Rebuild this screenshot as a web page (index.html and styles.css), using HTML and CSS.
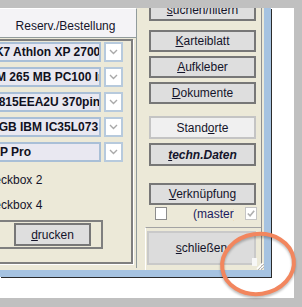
FILE: index.html
```html
<!DOCTYPE html>
<html lang="de">
<head>
  <meta charset="UTF-8">
  <title>Inventar - Gerät</title>
  <link rel="stylesheet" href="styles.css">
</head>
<body>
<div class="screen">
  <div class="window">
    <div class="client">

      <div class="left">
        <div class="tab-strip">
          <div class="tab">Reserv./Bestellung</div>
        </div>
        <div class="page">
          <div class="box">
            <div class="combo"><span class="field">CPU AMD K7 Athlon XP 2700</span><span class="drop"><svg width="9" height="6" viewBox="0 0 9 6"><polyline points="1,1 4.5,4.5 8,1" fill="none" stroke="#a9a9a9" stroke-width="1.4"/></svg></span></div>
            <div class="combo"><span class="field">RAM - DIMM 265 MB PC100 Infineon</span><span class="drop"><svg width="9" height="6" viewBox="0 0 9 6"><polyline points="1,1 4.5,4.5 8,1" fill="none" stroke="#a9a9a9" stroke-width="1.4"/></svg></span></div>
            <div class="combo"><span class="field">MB: Intel D815EEA2U 370pin</span><span class="drop"><svg width="9" height="6" viewBox="0 0 9 6"><polyline points="1,1 4.5,4.5 8,1" fill="none" stroke="#a9a9a9" stroke-width="1.4"/></svg></span></div>
            <div class="combo"><span class="field">HDD1 73,4 GB IBM IC35L073</span><span class="drop"><svg width="9" height="6" viewBox="0 0 9 6"><polyline points="1,1 4.5,4.5 8,1" fill="none" stroke="#a9a9a9" stroke-width="1.4"/></svg></span></div>
            <div class="combo"><span class="field">Windows XP Pro</span><span class="drop"><svg width="9" height="6" viewBox="0 0 9 6"><polyline points="1,1 4.5,4.5 8,1" fill="none" stroke="#a9a9a9" stroke-width="1.4"/></svg></span></div>

            <div class="checks">
              <div class="check">Checkbox 2</div>
              <div class="check">Checkbox 4</div>
            </div>

            <div class="print-group">
              <button class="btn print"><u>d</u>rucken</button>
            </div>
          </div>
        </div>
      </div>

      <div class="right">
        <div class="buttons">
          <button class="btn first"><u>s</u>uchen/filtern</button>
          <button class="btn"><u>K</u>arteiblatt</button>
          <button class="btn"><u>A</u>ufkleber</button>
          <button class="btn"><u>D</u>okumente</button>
          <button class="btn light gap-a">Stand<u>o</u>rte</button>
          <button class="btn italic"><u>t</u>echn.Daten</button>
          <button class="btn gap-b"><u>V</u>erknüpfung</button>
          <div class="check-row">
            <span class="cb"></span>
            <span class="master">(master)</span>
            <span class="cb checked"><svg width="11" height="11" viewBox="0 0 11 11"><polyline points="2,5.5 4.5,8 9,2.5" fill="none" stroke="#b0b0b0" stroke-width="1.8"/></svg></span>
          </div>
        </div>
        <div class="close-area">
          <button class="btn big"><u>s</u>chließen</button>
        </div>
      </div>

      <span class="grip"><svg width="12" height="12" viewBox="0 0 12 12"><rect x="0" y="0" width="5" height="8" fill="#f7f7f7"/><path d="M11 5 L5 11 M11 8 L8 11" stroke="#fff" stroke-width="1.5"/><path d="M12 6 L6 12 M12 9 L9 12" stroke="#b4b4b4" stroke-width="1"/></svg></span>
    </div>
  </div>
</div>

<svg class="mark" width="90" height="76" viewBox="0 0 90 76">
  <ellipse cx="42" cy="36" rx="36" ry="30" transform="rotate(-8 42 36)" fill="none" stroke="#f2865e" stroke-width="4"/>
</svg>
</body>
</html>
```

FILE: styles.css
```css
body {
  margin: 0;
  width: 302px;
  height: 307px;
  overflow: hidden;
  position: relative;
  background: #c0c0c0;
  font: 12px "Liberation Sans", Arial, sans-serif;
  color: #14142a;
}

.screen {
  margin-top: 8px;
  width: 294px;
  height: 290px;
  background: #fff;
}

.window {
  width: 264px;
  height: 262px;
  border-right: 7px solid #a6c3e1;
  border-bottom: 7px solid #a6c3e1;
  box-shadow: 1px 1px 0 #2b2b2b;
}

.client {
  display: flex;
  height: 100%;
  position: relative;
  background: #ece9d8;
  overflow: hidden;
}

/* left tab page */
.left {
  flex: none;
  width: 207px;
  margin-left: -70px;
  display: flex;
  flex-direction: column;
}

.tab-strip {
  flex: none;
  height: 29px;
  display: flex;
  justify-content: flex-end;
}

.tab {
  width: 142px;
  padding-top: 10px;
  line-height: 14px;
  text-align: center;
  background: #f4f3f6;
  border-top: 1px solid #fff;
  border-right: 1px solid #919b9c;
  box-sizing: border-box;
}

.page {
  flex: 1;
  margin-bottom: 2px;
  border-top: 1px solid #919b9c;
  border-right: 1px solid #919b9c;
  padding: 1px 3px 0 0;
}

.box {
  height: 225px;
  box-sizing: border-box;
  border: 2px solid #7f7f7f;
  box-shadow: 1px 1px 0 #fff;
  padding: 1px 0 0 2px;
}

.combo {
  display: flex;
  gap: 3px;
  height: 20px;
  margin-bottom: 5px;
}

.field {
  width: 167px;
  box-sizing: border-box;
  border: 2px solid #a9bfd7;
  background: #e9e8f1;
  font-weight: bold;
  line-height: 16px;
  white-space: nowrap;
  overflow: hidden;
  color: #101020;
}

.drop {
  width: 19px;
  box-sizing: border-box;
  border: 2px solid #b7cadd;
  background: #fff;
  display: flex;
  align-items: center;
  justify-content: center;
}

.checks {
  margin-top: 10px;
  padding-left: 45px;
}

.check {
  height: 16px;
  line-height: 16px;
  margin-bottom: 9px;
}

.print-group {
  width: 171px;
  height: 29px;
  margin-left: -2px;
  margin-top: -2px;
  box-sizing: border-box;
  border: 2px solid #7f7f7f;
  border-left: none;
  padding: 1px 10px 0 0;
  display: flex;
  justify-content: flex-end;
}

/* buttons */
.btn {
  display: block;
  height: 22px;
  padding: 0;
  font: inherit;
  color: inherit;
  background: #dedede;
  border: 2px solid #777;
  box-sizing: border-box;
}

.print {
  width: 77px;
  height: 23px;
}

.right {
  flex: none;
  width: 117px;
  margin-left: 8px;
  border-right: 1px solid #8f8f8f;
  box-sizing: border-box;
  display: flex;
  flex-direction: column;
}

.buttons {
  padding-left: 4px;
  display: flex;
  flex-direction: column;
  gap: 4px;
}

.buttons .btn {
  width: 107px;
}

.buttons .first {
  margin-top: -9px;
  margin-bottom: 5px;
}

.light {
  height: 23px;
  background: #f0f0f0;
  border-color: #c4c4c4;
}

.gap-a {
  margin-top: 8px;
}

.italic {
  height: 23px;
  font-weight: bold;
  font-style: italic;
}

.gap-b {
  margin-top: 13px;
}

.check-row {
  display: flex;
  align-items: center;
  height: 13px;
  margin-top: -2px;
  padding-left: 6px;
}

.cb {
  width: 12px;
  height: 13px;
  box-sizing: border-box;
  border: 1px solid #8c8c8c;
  background: #fff;
  display: flex;
  align-items: center;
  justify-content: center;
}

.cb.checked {
  border-color: #c4c4c4;
}

.master {
  width: 41px;
  margin-left: 26px;
  margin-right: 11px;
  overflow: hidden;
  white-space: nowrap;
  color: #1b1b60;
}

.close-area {
  margin-top: 7px;
  border-top: 1px solid #a3a3a3;
  border-left: 1px solid #fff;
  padding-top: 3px;
  flex: 1;
}

.big {
  width: 109px;
  height: 34px;
  margin-left: 1px;
  border-color: #c9c9c9;
  background: #dcdcdc;
}

.grip {
  position: absolute;
  right: 0;
  bottom: 0;
  width: 12px;
  height: 12px;
}

.mark {
  position: absolute;
  left: 216px;
  top: 228px;
  overflow: visible;
  filter: drop-shadow(0 2px 1px rgba(0, 0, 0, 0.25));
}
```
